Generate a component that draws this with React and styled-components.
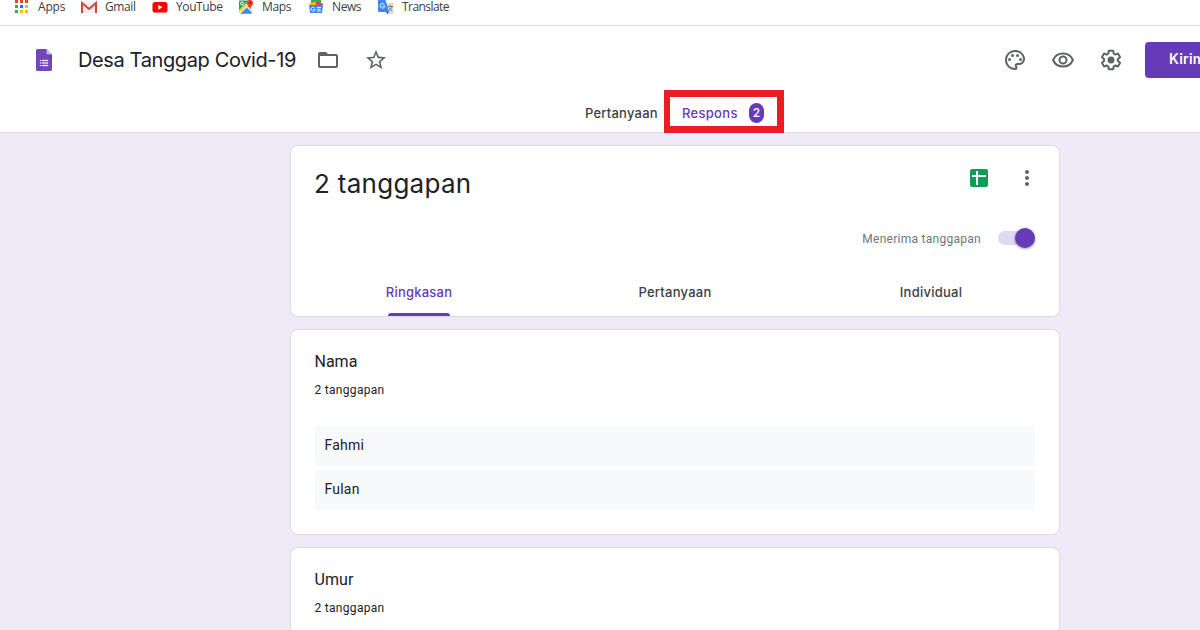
import React from "react";
import styled, { createGlobalStyle } from "styled-components";
import {
  MdFolderOpen,
  MdStarBorder,
  MdOutlinePalette,
  MdMoreVert,
} from "react-icons/md";

const GlobalStyle = createGlobalStyle`
  *, *::before, *::after { box-sizing: border-box; }
  html, body { margin: 0; padding: 0; overflow: hidden; }
  body { background: #fff; color: #202124; font-family: Roboto, "Liberation Sans", sans-serif; }
`;

const Page = styled.div`
  width: 1200px;
  height: 630px;
  overflow: hidden;
  display: flex;
  flex-direction: column;
  background: #eeeaf8;
`;

const Fit = styled.span`
  display: inline-block;
  white-space: nowrap;
  letter-spacing: ${(p) => p.$ls || 0}px;
`;

const BookmarksBar = styled.nav`
  flex: none;
  height: 26px;
  padding: 0 0 0 14px;
  display: flex;
  align-items: flex-start;
  background: #fff;
  border-bottom: 1px solid #dadce0;
`;

const Bookmark = styled.a`
  width: ${(p) => p.$w}px;
  height: 14px;
  display: flex;
  align-items: center;
  gap: 8px;
  font: 400 12px/14px "Open Sans", "Noto Sans", sans-serif;
  color: #3c4043;
  white-space: nowrap;
  svg { flex: none; display: block; }
`;

const Header = styled.header`
  flex: none;
  height: 107px;
  background: #fff;
  border-bottom: 1px solid #dadce0;
`;

const TitleRow = styled.div`
  height: 68px;
  padding-left: 36px;
  display: flex;
  align-items: center;
`;

const FormTitle = styled.h1`
  margin: 0 0 0 26px;
  width: 238px;
  font: 400 20px/28px Inter, sans-serif;
  color: #202124;
`;

const IconButton = styled.button`
  width: 24px;
  height: 24px;
  padding: 0;
  border: 0;
  background: none;
  color: #5f6368;
  margin-right: 24px;
  flex: none;
  svg { display: block; width: 24px; height: 24px; }
`;

const Actions = styled.div`
  margin-left: auto;
  width: 197px;
  display: flex;
  align-items: center;
`;

const SendButton = styled.button`
  flex: none;
  width: 88px;
  height: 36px;
  margin-left: -2px;
  padding: 0 0 2px 24px;
  border: 0;
  border-radius: 4px;
  background: #673ab7;
  color: #fff;
  text-align: left;
  font: 600 14px/20px Inter, sans-serif;
`;

const FormTabs = styled.div`
  height: 39px;
  padding: 0 0 0 585px;
  display: flex;
  align-items: flex-start;
`;

const FormTab = styled.div`
  width: 79px;
  padding-top: 9px;
  font: 500 13px/20px Inter, sans-serif;
  color: #3c4043;
`;

const HighlightedTab = styled.div`
  position: relative;
  width: 120px;
  height: 43px;
  margin-top: -4px;
  flex: none;
  display: flex;
  align-items: center;
  justify-content: space-between;
  padding: 3px 14px 0 12px;
  border: 6px solid #ed1c24;
  border-width: 7px 7px 7px 6px;
  background: #fff;
  font: 500 13px/20px Inter, sans-serif;
  color: #673ab7;
`;

const CountBadge = styled.span`
  width: 15px;
  height: 20px;
  margin-right: -1px;
  border-radius: 7.5px;
  background: #673ab7;
  color: #fff;
  font: 500 12px/20px Inter, sans-serif;
  text-align: center;
`;

const Main = styled.main`
  flex: 1;
  min-height: 0;
  width: 770px;
  margin-left: 290px;
  padding-top: 12px;
  display: flex;
  flex-direction: column;
  gap: 12px;
`;

const Card = styled.section`
  flex: none;
  height: ${(p) => p.$h}px;
  padding: ${(p) => p.$pad || "0 24px"};
  border: 1px solid #dadce0;
  border-radius: 8px;
  background: #fff;
`;

const SummaryHead = styled.div`
  height: 64px;
  padding-top: 8px;
  display: flex;
  align-items: center;
`;

const Count = styled.h2`
  margin: 4px auto 0 -1px;
  font: 400 26px/36px Inter, sans-serif;
`;

const HeadIcons = styled.div`
  display: flex;
  align-items: center;
  gap: 27px;
  margin-right: -4px;
  margin-top: -8px;
  svg { display: block; flex: none; }
`;

const AcceptRow = styled.label`
  height: 56px;
  display: flex;
  align-items: center;
  justify-content: flex-end;
  gap: 17px;
  font-size: 12px;
  line-height: 16px;
  color: #70757a;
`;

const AcceptLabel = styled.span`
  padding-top: 2px;
`;

const Toggle = styled.span`
  width: 37px;
  height: 14px;
  border-radius: 7px;
  background: #e1d8f1;
  display: flex;
  align-items: center;
  justify-content: flex-end;
`;

const Knob = styled.span`
  flex: none;
  width: 20px;
  height: 20px;
  border-radius: 50%;
  background: #673ab7;
  box-shadow: 0 1px 3px rgba(0, 0, 0, 0.4);
`;

const ViewTabs = styled.div`
  height: 50px;
  margin: 0 -24px;
  display: grid;
  grid-template-columns: repeat(3, 1fr);
`;

const ViewTab = styled.div`
  display: flex;
  flex-direction: column;
  align-items: center;
  justify-content: space-between;
  padding-top: 16px;
  font: 500 13px/20px Inter, sans-serif;
  color: ${(p) => (p.$active ? "#673ab7" : "#3c4043")};
`;

const Underline = styled.span`
  width: 62px;
  height: 3px;
  border-radius: 3px 3px 0 0;
  background: #673ab7;
`;

const Question = styled.h3`
  margin: 0 0 0 -0.5px;
  font: 400 16px/24px Roboto, sans-serif;
`;

const Responses = styled.p`
  margin: 8px 0 0 -0.5px;
  font-size: 12px;
  line-height: 16px;
`;

const Answers = styled.div`
  margin-top: 28px;
  display: flex;
  flex-direction: column;
  gap: 4px;
`;

const Answer = styled.div`
  height: 40px;
  padding: 9px 9.5px;
  border-radius: 4px;
  background: #f8f9fa;
  font-size: 14px;
  line-height: 20px;
`;

const appColors = ["#ea4335", "#ea4335", "#ea4335", "#34a853", "#1a73e8", "#fbbc04", "#34a853", "#fbbc04", "#fbbc04"];

const AppsIcon = () => (
  <svg width="16" height="14" viewBox="0 0 16 14">
    {appColors.map((c, i) => (
      <rect key={i} x={1 + (i % 3) * 5} y={Math.floor(i / 3) * 5} width="3" height="3" fill={c} />
    ))}
  </svg>
);

const GmailIcon = () => (
  <svg width="16" height="14" viewBox="0 0 16 14">
    <path d="M1 2h14v11H1z" fill="#eee" />
    <path d="M1 13V3l7 6 7-6v10" fill="none" stroke="#d64538" strokeWidth="2" />
  </svg>
);

const YouTubeIcon = () => (
  <svg width="16" height="14" viewBox="0 0 16 14">
    <rect x="0.5" y="2" width="15" height="10.5" rx="2.6" fill="#f00" />
    <path d="M6.3 4.8v5l4.2-2.5z" fill="#fff" />
  </svg>
);

const MapsIcon = () => (
  <svg width="16" height="14" viewBox="0 0 16 14">
    <rect x="1" y="0.500" width="13" height="13" rx="1" fill="#1fa463" />
    <path d="M2 13.500 8 7.500 14 13.500z" fill="#4285f4" />
    <path d="M1 11.500 11 1.500l2 2L2.500 13.500H1z" fill="#fff" />
    <path d="M1 10 9.500 1.500l2 2L1.500 13z" fill="#fdd042" />
    <path d="m8.500 7.500 5.500 5.500V6z" fill="#dfe3e6" />
    <path d="M12 10C12 7 8.900 5.500 8.900 3a3.100 3.100 0 0 1 6.200 0C15.100 5.500 12 7 12 10z" fill="#ea4335" />
    <circle cx="12" cy="3" r="1.100" fill="#8c1d18" />
    <circle cx="4" cy="3.500" r="1.500" fill="none" stroke="#fff" />
  </svg>
);

const NewsIcon = () => (
  <svg width="16" height="14" viewBox="0 0 16 14">
    <path d="M3 0h10v5H3z" fill="#34a853" />
    <path d="m1 3.500 7-2 1 4H2z" fill="#fbbc04" />
    <path d="m8 2 7 1.500-1 3H8z" fill="#ea4335" />
    <path d="M1 5h14l-1 8H2z" fill="#4285f4" />
    <path d="M6.700 7.900a2 2 0 1 0 .4 1.400H5.600M9 7.500h4M9 9.300h3.500M9 11h4" fill="none" stroke="#fff" strokeWidth="0.900" />
  </svg>
);

const TranslateIcon = () => (
  <svg width="16" height="14" viewBox="0 0 16 14">
    <path d="M6 3h9.500v11H9z" fill="#dcdcdc" />
    <path d="M9.500 6.500H15M12.200 5v1.500M14 6.700c-.5 2-2 3.300-3.500 4.200M10.800 7.500c.6 1.500 2 2.700 3.500 3.300" fill="none" stroke="#5f7480" strokeWidth="0.900" />
    <path d="M0 0h7.500l3.500 12H1.200A1.200 1.200 0 0 1 0 10.800z" fill="#4285f4" />
    <path d="M8 12h3l-2 2z" fill="#3056b5" />
    <path d="M6.200 4.200a2.300 2.300 0 1 0 .6 1.900H4.500" fill="none" stroke="#fff" />
  </svg>
);

const FormsLogo = () => (
  <svg width="16" height="22" viewBox="0 0 16 22">
    <path d="M1.500 0H10.500L16 5.500V20.500A1.500 1.500 0 0 1 14.500 22H1.500A1.500 1.500 0 0 1 0 20.500V1.500A1.500 1.500 0 0 1 1.500 0z" fill="#7248b9" />
    <path d="M10.500 5.500H16V11z" fill="#5f37a5" opacity=".6" />
    <path d="M10.500 0 16 5.500H12a1.500 1.500 0 0 1-1.500-1.500z" fill="#c7b8e4" />
    <path d="M4 11h1v1H4zm2 0h6v1H6zM4 13.500h1v1H4zm2 0h6v1H6zM4 16h1v1H4zm2 0h6v1H6z" fill="#f1ecf9" stroke="#f1ecf9" strokeWidth="0.300" />
  </svg>
);

const EyeIcon = () => (
  <svg viewBox="0 0 24 24" fill="none" stroke="currentColor" strokeWidth="2">
    <path d="M2.100 12C3.800 8 7.600 5.500 12 5.500S20.200 8 21.900 12C20.200 16 16.400 18.500 12 18.500S3.800 16 2.100 12z" />
    <circle cx="12" cy="12" r="3.500" />
  </svg>
);

const GearIcon = () => (
  <svg viewBox="0 0 24 24" fill="currentColor">
    <path d="M13.850 22.250h-3.700c-.74 0-1.360-.54-1.450-1.270l-.27-1.890c-.27-.14-.53-.29-.79-.46l-1.800.72c-.7.26-1.470-.03-1.810-.65L2.200 15.530c-.35-.66-.2-1.440.36-1.880l1.530-1.190c-.01-.15-.02-.3-.02-.46 0-.15.01-.31.02-.46l-1.520-1.190c-.59-.45-.74-1.260-.37-1.880l1.850-3.190c.34-.62 1.110-.9 1.790-.63l1.810.73c.26-.17.52-.32.78-.46l.27-1.910c.09-.7.71-1.250 1.440-1.250h3.700c.74 0 1.360.54 1.450 1.270l.27 1.890c.27.14.53.29.79.46l1.800-.72c.71-.26 1.480.03 1.820.65l1.840 3.180c.36.66.2 1.440-.36 1.880l-1.520 1.190c.01.15.02.3.02.46s-.01.31-.02.46l1.520 1.190c.56.45.72 1.230.37 1.860l-1.860 3.220c-.34.62-1.110.9-1.800.63l-1.800-.72c-.26.17-.52.32-.78.46l-.27 1.910c-.1.68-.72 1.220-1.460 1.220zm-3.230-2h2.760l.37-2.550.53-.22c.44-.18.88-.44 1.340-.78l.45-.34 2.380.96 1.380-2.400-2.030-1.580.07-.56c.03-.26.06-.51.06-.78s-.03-.53-.06-.78l-.07-.56 2.030-1.580-1.390-2.400-2.390.96-.45-.35c-.42-.32-.87-.58-1.330-.77l-.52-.22-.37-2.550h-2.760l-.37 2.550-.53.21c-.44.19-.88.44-1.340.79l-.45.33-2.380-.95-1.390 2.390 2.030 1.580-.07.56a7 7 0 0 0-.06.79c0 .26.02.53.06.78l.07.56-2.030 1.580 1.380 2.400 2.390-.96.45.35c.43.33.86.58 1.330.77l.53.22.38 2.550z" />
    <circle cx="12" cy="12" r="3.500" />
  </svg>
);

const SheetsIcon = () => (
  <svg width="18" height="18" viewBox="0 0 18 18">
    <rect width="18" height="18" rx="2" fill="#0f9d58" />
    <path d="M2 6h14v2H2z" fill="#fff" />
    <path d="M6 2h2v14H6z" fill="#fff" />
  </svg>
);

const bookmarks = [
  { label: "Apps", Icon: AppsIcon, w: 67, ls: -0.2 },
  { label: "Gmail", Icon: GmailIcon, w: 71, ls: -0.4 },
  { label: "YouTube", Icon: YouTubeIcon, w: 86, ls: -0.4 },
  { label: "Maps", Icon: MapsIcon, w: 70, ls: -0.35 },
  { label: "News", Icon: NewsIcon, w: 70, ls: -0.4 },
  { label: "Translate", Icon: TranslateIcon, w: 80, ls: -0.55 },
];

export default function App() {
  return (
    <>
      <GlobalStyle />
      <Page>
        <BookmarksBar>
          {bookmarks.map(({ label, Icon, w, ls }) => (
            <Bookmark key={label} $w={w}>
              <Icon />
              <Fit $ls={ls}>{label}</Fit>
            </Bookmark>
          ))}
        </BookmarksBar>
        <Header>
          <TitleRow>
            <FormsLogo />
            <FormTitle><Fit $ls={-0.38}>Desa Tanggap Covid-19</Fit></FormTitle>
            <IconButton aria-label="Folder"><MdFolderOpen /></IconButton>
            <IconButton aria-label="Bintang"><MdStarBorder /></IconButton>
            <Actions>
              <IconButton aria-label="Tema"><MdOutlinePalette /></IconButton>
              <IconButton aria-label="Pratinjau"><EyeIcon /></IconButton>
              <IconButton aria-label="Setelan"><GearIcon /></IconButton>
              <SendButton><Fit $ls={0.2}>Kirim</Fit></SendButton>
            </Actions>
          </TitleRow>
          <FormTabs>
            <FormTab><Fit $ls={0.22}>Pertanyaan</Fit></FormTab>
            <HighlightedTab>
              <Fit $ls={0.3}>Respons</Fit>
              <CountBadge>2</CountBadge>
            </HighlightedTab>
          </FormTabs>
        </Header>
        <Main>
          <Card $h={172}>
            <SummaryHead>
              <Count><Fit $ls={0.28}>2 tanggapan</Fit></Count>
              <HeadIcons>
                <SheetsIcon />
                <MdMoreVert size={24} color="#5f6368" />
              </HeadIcons>
            </SummaryHead>
            <AcceptRow>
              <AcceptLabel><Fit $ls={0.27}>Menerima tanggapan</Fit></AcceptLabel>
              <Toggle><Knob /></Toggle>
            </AcceptRow>
            <ViewTabs>
              <ViewTab $active><Fit $ls={0.22}>Ringkasan</Fit><Underline /></ViewTab>
              <ViewTab><Fit $ls={0.25}>Pertanyaan</Fit></ViewTab>
              <ViewTab><Fit $ls={0.25}>Individual</Fit></ViewTab>
            </ViewTabs>
          </Card>
          <Card $h={206} $pad="20px 24px">
            <Question><Fit>Nama</Fit></Question>
            <Responses><Fit $ls={0.3}>2 tanggapan</Fit></Responses>
            <Answers>
              <Answer><Fit $ls={0.2}>Fahmi</Fit></Answer>
              <Answer><Fit $ls={0.2}>Fulan</Fit></Answer>
            </Answers>
          </Card>
          <Card $h={206} $pad="20px 24px">
            <Question><Fit $ls={0.1}>Umur</Fit></Question>
            <Responses><Fit $ls={0.3}>2 tanggapan</Fit></Responses>
          </Card>
        </Main>
      </Page>
    </>
  );
}
